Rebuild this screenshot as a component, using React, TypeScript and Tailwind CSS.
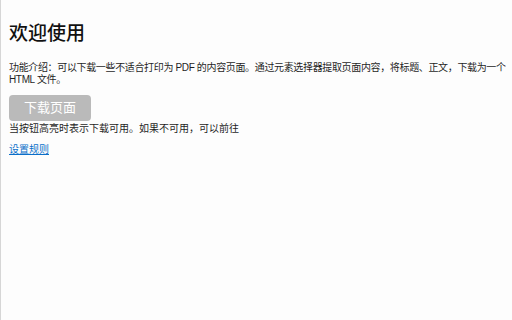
export default function App() {
  return (
    <div className="w-[512px] h-[320px] bg-[#fdfdfd] border-l border-[#d6d6d6] overflow-hidden text-[#1f1f1f] font-['Liberation_Sans','Noto_Sans_CJK_SC',sans-serif]">
      <div className="pl-[8px] pt-[22px]">
        <h1 className="text-[19px] leading-[23px] font-medium text-[#111]">欢迎使用</h1>
        <p className="mt-[17px] text-[10px] leading-[12px] tracking-[-0.35px] pr-[2px]">
          功能介绍：可以下载一些不适合打印为 PDF 的内容页面。通过元素选择器提取页面内容，将标题、正文，下载为一个 HTML 文件。
        </p>
        <button className="mt-[9px] w-[82px] h-[26px] rounded-[4px] bg-[#bababa] text-white text-[13px] leading-[26px] block">
          下载页面
        </button>
        <p className="mt-[2px] text-[10px] leading-[12px]">当按钮高亮时表示下载可用。如果不可用，可以前往</p>
        <a href="#" className="mt-[9px] block w-fit text-[10px] leading-[12px] text-[#0b6fc9] underline">设置规则</a>
      </div>
    </div>
  );
}
